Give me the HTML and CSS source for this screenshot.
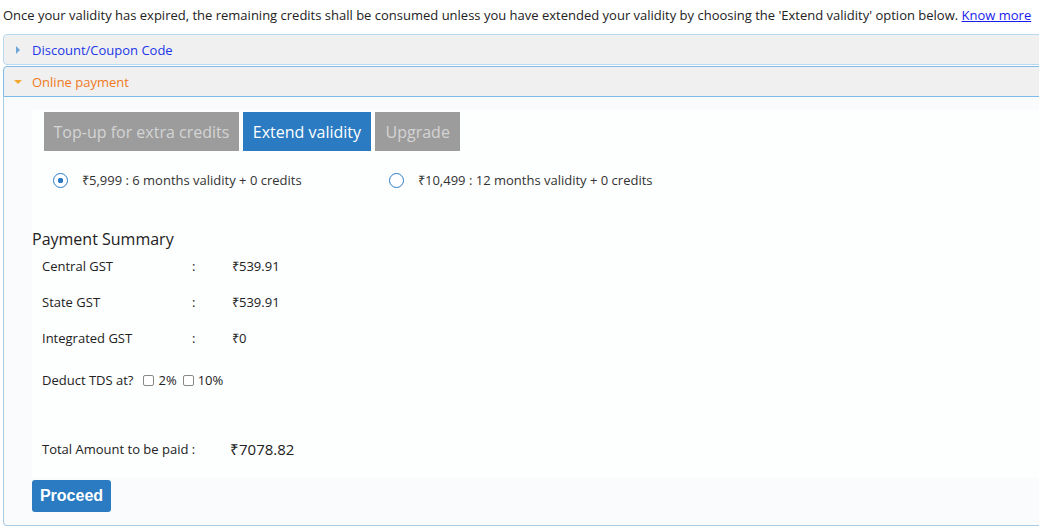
FILE: index.html
```html
<!DOCTYPE html>
<html lang="en">
<head>
<meta charset="UTF-8">
<title>Online payment</title>
<link rel="stylesheet" href="styles.css">
</head>
<body>
<p class="notice">Once your validity has expired, the remaining credits shall be consumed unless you have extended your validity by choosing the 'Extend validity' option below. <a href="#">Know more</a></p>

<div class="accordion">
  <div class="acc-head">
    <span class="arrow right"></span>
    <span class="acc-title">Discount/Coupon Code</span>
  </div>

  <div class="acc-head open">
    <span class="arrow down"></span>
    <span class="acc-title">Online payment</span>
  </div>
  <div class="acc-body">
    <div class="inner">
      <div class="tabs">
        <button class="tab">Top-up for extra credits</button>
        <button class="tab active">Extend validity</button>
        <button class="tab">Upgrade</button>
      </div>

      <div class="plans">
        <label class="plan"><input type="radio" name="plan" checked> ₹5,999 : 6 months validity + 0 credits</label>
        <label class="plan"><input type="radio" name="plan"> ₹10,499 : 12 months validity + 0 credits</label>
      </div>

      <h3 class="summary-title">Payment Summary</h3>
      <div class="summary">
        <div class="row"><span class="lbl">Central GST</span><span class="colon">:</span><span class="val">₹539.91</span></div>
        <div class="row"><span class="lbl">State GST</span><span class="colon">:</span><span class="val">₹539.91</span></div>
        <div class="row"><span class="lbl">Integrated GST</span><span class="colon">:</span><span class="val">₹0</span></div>
      </div>

      <div class="tds">
        <span>Deduct TDS at?</span>
        <label><input type="checkbox"> 2%</label>
        <label><input type="checkbox"> 10%</label>
      </div>

      <div class="total">
        <span class="total-lbl">Total Amount to be paid :</span>
        <span class="total-val">₹7078.82</span>
      </div>
    </div>
    <button class="proceed">Proceed</button>
  </div>
</div>
</body>
</html>
```

FILE: styles.css
```css
body {
  margin: 0;
  padding: 0 0 0 3px;
  background: #fff;
  color: #222;
  font-family: 'Open Sans', sans-serif;
  font-size: 13px;
  overflow: hidden;
}

.notice {
  margin: 0;
  padding: 6px 0 9px 0;
  line-height: 19px;
  white-space: nowrap;
}

.notice a {
  color: #1a1aee;
}

.accordion {
  width: 1050px;
}

.acc-head {
  display: flex;
  align-items: center;
  height: 29px;
  background: #f0f0f0;
  border: 1px solid #b8d8ef;
  border-radius: 4px;
  margin-bottom: 1px;
}

.acc-head.open {
  border-color: #7fbbe8;
  border-radius: 4px 4px 0 0;
  margin-bottom: 0;
}

.arrow {
  width: 0;
  height: 0;
  margin: 0 9px 0 10px;
}

.arrow.right {
  border-top: 4px solid transparent;
  border-bottom: 4px solid transparent;
  border-left: 4px solid #6ea6d8;
  margin-left: 12px;
  margin-right: 12px;
}

.arrow.down {
  border-left: 4px solid transparent;
  border-right: 4px solid transparent;
  border-top: 4px solid #f2a72e;
  margin-right: 10px;
}

.acc-title {
  color: #2136e8;
}

.open .acc-title {
  color: #ef7a23;
}

.acc-body {
  background: #f9fbfc;
  border: 1px solid #a8cbe6;
  border-top: none;
  border-radius: 0 0 4px 4px;
  padding: 13px 0 13px 28px;
}

.inner {
  background: #fdfefe;
  padding: 2px 0 18px 0;
  margin-right: 12px;
}

.tabs {
  display: flex;
  gap: 4px;
  padding-left: 12px;
}

.tab {
  font-family: 'Open Sans', sans-serif;
  font-size: 16px;
  height: 39px;
  padding: 0 9.5px;
  border: none;
  background: #9c9c9c;
  color: #d4d4d4;
}

.tab.active {
  background: #2a7bc2;
  color: #fff;
  padding: 0 10px;
}

.tab:last-child {
  padding: 0 10.5px;
}

.plans {
  display: flex;
  padding: 19px 0 0 21px;
  height: 20px;
  align-items: center;
}

.plan {
  display: flex;
  align-items: center;
  gap: 14px;
  width: 336px;
  color: #333;
}

.plan input {
  appearance: none;
  margin: 0;
  width: 15px;
  height: 15px;
  border: 1.5px solid #2a7bc2;
  border-radius: 50%;
  box-sizing: border-box;
  background: #fff;
}

.plan input:checked {
  background: radial-gradient(circle, #2a7bc2 0 2.5px, #fff 3px);
}

.summary-title {
  font-weight: normal;
  font-size: 16px;
  margin: 38px 0 0 0;
  line-height: 22px;
  color: #222;
}

.summary {
  padding-left: 10px;
  margin-top: -2px;
}

.row {
  display: flex;
  height: 36px;
  align-items: center;
}

.lbl {
  width: 150px;
}

.colon {
  width: 40px;
}

.tds {
  display: flex;
  align-items: center;
  padding: 14px 0 0 10px;
  height: 20px;
}

.tds label {
  display: flex;
  align-items: center;
  gap: 4px;
  margin-left: 6px;
}

.tds label:first-of-type {
  margin-left: 10px;
}

.tds input {
  appearance: none;
  margin: 0;
  width: 11px;
  height: 11px;
  border: 1px solid #888;
  border-radius: 2px;
  background: #fff;
}

.total {
  display: flex;
  align-items: center;
  padding: 48px 0 0 10px;
  height: 22px;
}

.total-lbl {
  width: 188px;
}

.total-val {
  font-size: 15px;
}

.proceed {
  margin-top: 2px;
  font-family: 'Liberation Sans', Arial, sans-serif;
  font-weight: bold;
  font-size: 16px;
  color: #fff;
  background: #2a7bc2;
  border: none;
  border-radius: 3px;
  width: 79px;
  height: 32px;
  padding: 0;
}
```
